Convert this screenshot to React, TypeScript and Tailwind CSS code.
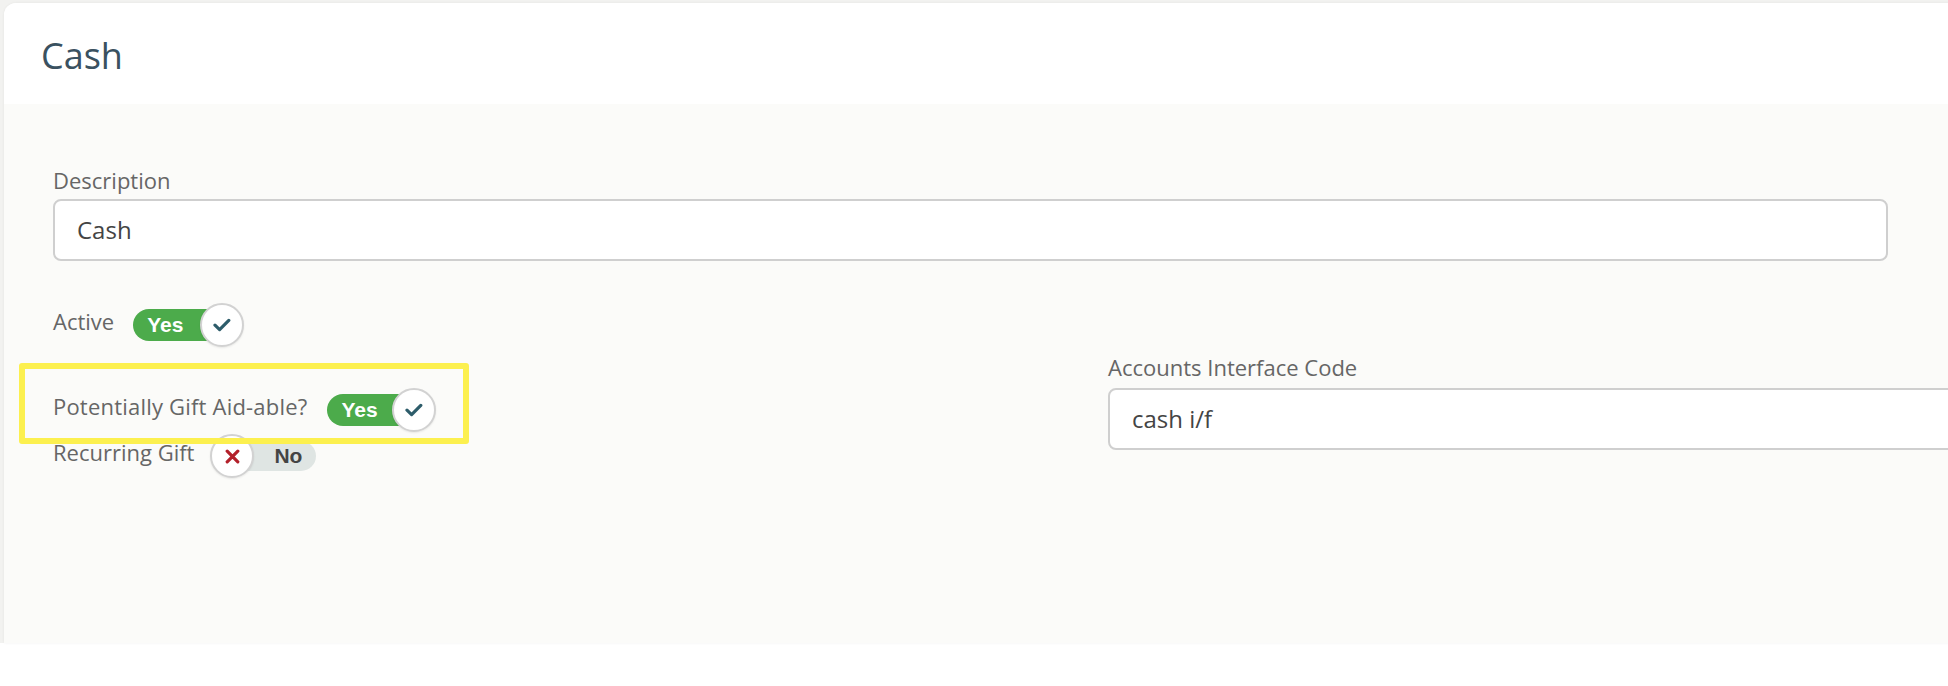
import React from "react";

function CheckIcon() {
  return (
    <svg width="18" height="14" viewBox="0 0 18 14" fill="none">
      <path d="M2 7.2 L6.6 11.6 L15.8 2.4" stroke="#2d5c6a" strokeWidth="3.2" strokeLinecap="round" strokeLinejoin="round" />
    </svg>
  );
}

function XIcon() {
  return (
    <svg width="15" height="15" viewBox="0 0 15 15" fill="none">
      <path d="M2.2 2.2 L12.8 12.8 M12.8 2.2 L2.2 12.8" stroke="#b3202a" strokeWidth="3.2" strokeLinecap="round" />
    </svg>
  );
}

function ToggleOn({ width }: { width: number }) {
  return (
    <div className="flex items-center">
      <div
        className="h-[32px] rounded-full bg-[#4cab4b] flex items-center pl-[14px] text-white font-bold text-[21px] font-['Liberation_Sans',Arial,sans-serif]"
        style={{ width }}
      >
        Yes
      </div>
      <div className="-ml-[22px] w-[44px] h-[44px] rounded-full bg-white border-2 border-[#d2d2d2] flex items-center justify-center shadow-[0_1px_2px_rgba(0,0,0,0.08)]">
        <CheckIcon />
      </div>
    </div>
  );
}

function ToggleOff() {
  return (
    <div className="flex items-center">
      <div className="relative z-10 w-[44px] h-[44px] rounded-full bg-white border-2 border-[#d2d2d2] flex items-center justify-center shadow-[0_1px_2px_rgba(0,0,0,0.08)]">
        <XIcon />
      </div>
      <div className="-ml-[22px] h-[30px] w-[84px] rounded-full bg-[#dfe5e3] flex items-center pl-[42px] text-[#444] font-bold text-[21px] font-['Liberation_Sans',Arial,sans-serif]">
        No
      </div>
    </div>
  );
}

export default function App() {
  return (
    <div className="w-[1948px] h-[686px] overflow-hidden bg-white font-['Open_Sans',sans-serif]">
      <div className="h-[643px] bg-[#f2f2f0] pt-[3px] pl-[4px]">
        <div className="h-full w-[1960px] rounded-tl-[12px] bg-[#fbfbf9] flex flex-col overflow-hidden shadow-[0_0_3px_rgba(0,0,0,0.06)]">
          <div className="h-[101px] shrink-0 bg-white flex items-center pl-[37px]">
            <h1 className="text-[36px] leading-none text-[#3a5160] font-normal mt-[5px]">Cash</h1>
          </div>
          <div className="relative flex-1 pl-[49px] pt-[61px]">
            <div className="text-[22px] leading-[30px] text-[#666] mb-[4px]">Description</div>
            <div className="w-[1835px] h-[62px] rounded-[8px] border-2 border-[#cfcfcf] bg-white flex items-center pl-[22px] text-[24px] text-[#444]">
              Cash
            </div>
            <div className="flex items-start mt-[42px]">
              <div className="w-[1055px] shrink-0 flex flex-col">
                <div className="flex items-center h-[44px]">
                  <span className="text-[22px] leading-[30px] text-[#666] pb-[8px]">Active</span>
                  <div className="ml-[19px]">
                    <ToggleOn width={89} />
                  </div>
                </div>
                <div className="flex items-center h-[44px] mt-[41px]">
                  <span className="text-[22px] leading-[30px] text-[#666] pb-[8px] tracking-[0.2px]">Potentially Gift Aid-able?</span>
                  <div className="ml-[20px]">
                    <ToggleOn width={87} />
                  </div>
                </div>
                <div className="flex items-center h-[44px] mt-[2px]">
                  <span className="text-[22px] leading-[30px] text-[#666] pb-[8px]">Recurring Gift</span>
                  <div className="ml-[16px]">
                    <ToggleOff />
                  </div>
                </div>
              </div>
              <div className="pt-[49px] flex flex-col">
                <div className="text-[22px] leading-[30px] text-[#666] mb-[6px]">Accounts Interface Code</div>
                <div className="w-[900px] h-[62px] rounded-[8px] border-2 border-[#cfcfcf] bg-white flex items-center pl-[22px] text-[24px] text-[#444]">
                  cash i/f
                </div>
              </div>
            </div>
            <div className="absolute z-20 left-[15px] top-[259px] w-[450px] h-[81px] border-[6px] border-[#fcf04f] rounded-[3px] pointer-events-none" />
          </div>
        </div>
      </div>
    </div>
  );
}
